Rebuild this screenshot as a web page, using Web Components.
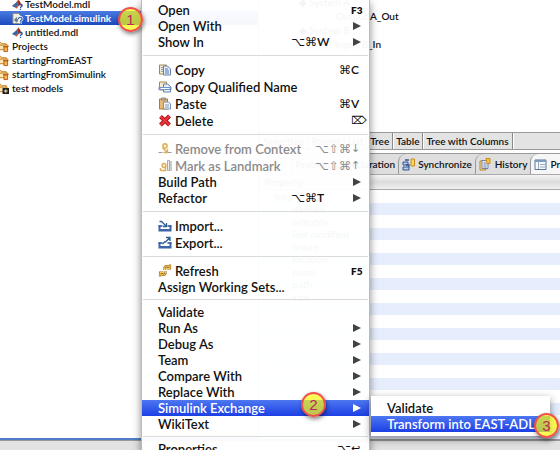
<!DOCTYPE html>
<html lang="en">
<head>
<meta charset="utf-8">
<title>Workbench context menu</title>
<style>
html, body { margin: 0; height: 100%; overflow: hidden; background: #fff; }
body { font: 600 10px/14px Lato, "Noto Sans", sans-serif; color: #111; }
</style>
</head>
<body>
<work-bench></work-bench>
<script>
const ICONS = {
  copy: '<path d="M1 2h7v9H1z" fill="#f6ead0" stroke="#a08a50"/><path d="M5 3h4l3 3v6H5z" fill="#e6eefb" stroke="#6580a8"/><path d="M6.500 6h3M6.500 8h4M6.500 10h4" stroke="#4a74b8"/><path d="M2.500 4.500h2M2.500 6.500h2M2.500 8.500h2" stroke="#7d9cc8"/>',
  copyName: '<path d="M1 2h7v8H1z" fill="#f6ead0" stroke="#a08a50"/><path d="M5 4h4l3 2.500V12H5z" fill="#e6eefb" stroke="#6580a8"/><path d="M0 7h13v3H0z" fill="#6f95cc"/><path d="M2 8.500h9" stroke="#fff"/>',
  paste: '<path d="M1 2h8v10H1z" fill="#e8b877" stroke="#b07830"/><path d="M3 1h4v2H3z" fill="#bbb" stroke="#888"/><path d="M5 5h5l2 2v5H5z" fill="#f2f5fb" stroke="#7d8fae"/><path d="M6.500 8h4M6.500 10h4" stroke="#7a98c4"/>',
  del: '<path d="M2 2.500L11 11M11 2L2 11" stroke="#a30f16" stroke-width="4"/><path d="M2 2.500L11 11M11 2L2 11" stroke="#f0343a" stroke-width="2.400"/>',
  remove: '<path d="M0 10.500h4M9 10.500h4" stroke="#99a" stroke-width="1.200"/><circle cx="6.500" cy="4" r="2.200" fill="#fbeecb" stroke="#dcae5c" stroke-width="1.400"/><path d="M4 6l5 4.500M9 7v3.500H5" fill="none" stroke="#dcae5c" stroke-width="1.400"/>',
  mark: '<path d="M9 1.500h2v10H9z" fill="#eee" stroke="#aaa"/><path d="M12.500 2v10" stroke="#999"/><circle cx="5.500" cy="6.500" r="2" fill="#fbeecb" stroke="#dcae5c" stroke-width="1.400"/><path d="M2 11.500h5V8M2 9v2.500" fill="none" stroke="#dcae5c" stroke-width="1.500"/>',
  imp: '<path d="M0 6.500h2V10h9V6.500h2v6H0z" fill="#3d66a8"/><path d="M0 7h4M9 7h4" stroke="#2b5195" stroke-width="1.400"/><path d="M1 2.500h2l5 5M8 4v3.500H4.500" fill="none" stroke="#2b6097" stroke-width="1.300"/>',
  exp: '<path d="M0 6.500h2V10h9V6.500h2v6H0z" fill="#3d66a8"/><path d="M0 7h4M9 7h4" stroke="#2b5195" stroke-width="1.400"/><path d="M4 8l2-2h1l4-4M7.500 1.500H11.500V5" fill="none" stroke="#2b6097" stroke-width="1.300"/>',
  refresh: '<path d="M6 6V3.500C7 1.500 9 2 11 3M11.500 .500V4.500H8M7 7V9.500C6 11.500 4 11 2 10M1.500 12.500V8.500H5" fill="none" stroke="#a8681a" stroke-width="2.200"/><path d="M6 6V3.500C7 1.500 9 2 11 3M11.500 1V4.500H8.500M7 7V9.500C6 11.500 4 11 2 10M1.500 12V8.500H4.500" fill="none" stroke="#f7cf58" stroke-width="1"/>',
  mdl: '<path d="M0 8l4-3 3-4 2 3 2 5-3-2-3 4-2-2z" fill="#d8552a"/><path d="M0 8l4-3 2-2 0 4-2 3z" fill="#2f6fae"/><path d="M7 1l2 4-2 3z" fill="#8c2013"/><path d="M7.500 7.500c0-2 3.500-2 3.500 0 0 1.500-1.700 1-1.700 2.700M9.200 11v1.500" fill="none" stroke="#1f55b8" stroke-width="1.400"/>',
  slk: '<path d="M1 1h6l3 3v8H1z" fill="#f4f1e4" stroke="#8e8c80"/><path d="M2 8l3-3 2 3-2 3z" fill="#6d7f86"/><path d="M7 7c0-2.500 4-2.500 4 0 0 1.500-2 1-2 3M9 11v1.500" fill="none" stroke="#fff" stroke-width="2.600"/><path d="M7 7c0-2.500 4-2.500 4 0 0 1.500-2 1-2 3M9 11v1.500" fill="none" stroke="#1f55b8" stroke-width="1.300"/>',
  folder: '<path d="M0 2h4l1 1.500h5V6H0z" fill="#fbd99a" stroke="#c07a1c"/><path d="M0 10l2-5h10l-2 5z" fill="#fde6b4" stroke="#c07a1c"/><path d="M7.500 7h4v5h-4z" fill="#f9b45a" stroke="#b45c10"/><path d="M6.500 6.500h6" stroke="#b45c10"/>',
  closed: '<path d="M0 2h4l1 1.500h5V6H0z" fill="#fbd99a" stroke="#c07a1c"/><path d="M0 10l2-5h9l-1 5z" fill="#fde6b4" stroke="#c07a1c"/><path d="M6 6h7v6.500H6z" fill="#221f18"/><path d="M7.500 9.200h4M9.500 7.500V11" stroke="#e9e3cf" stroke-width="1.200"/>',
  sync: '<path d="M1 4h5v3H1zM1 9h6v3H1z" fill="#b9cdea" stroke="#2f5592"/><path d="M3 2h4M4 7h3v2" stroke="#2f5592" fill="none" stroke-width="1.300"/><path d="M9 1h3.500v7H9z" fill="#fbd36a" stroke="#c98a1c"/>',
  hist: '<path d="M1 3h6v9H1z" fill="#f3dc9b" stroke="#b5872a"/><path d="M3 2.500h6v8H3z" fill="#e9eef8" stroke="#6f83aa"/><path d="M4.500 5h3M4.500 7h3M4.500 9h3" stroke="#6f83aa"/><path d="M7 .500h4v5H8z" fill="#fbc33c" stroke="#c98a1c"/>',
  props: '<path d="M1 2h11v9.500H1z" fill="#f6f9ff" stroke="#58759e"/><path d="M1 2h11v2H1z" fill="#7f9ac0"/><path d="M4.500 4v7M6 6.500h5M6 9h5" stroke="#9ab"/>'
};
const icon = n => ICONS[n] ? `<svg viewBox="0 0 13 13" aria-hidden="true">${ICONS[n]}</svg>` : '';

function define(name, render) {
  customElements.define(name, class extends HTMLElement {
    connectedCallback() {
      if (!this.shadowRoot) this.attachShadow({ mode: 'open' }).innerHTML = render(this);
    }
  });
}

define('tree-row', el => `<style>
  :host { display: flex; align-items: center; height: 14px; padding-left: 12px; white-space: nowrap; }
  :host([folder]) { padding-left: 0; }
  :host([selected]) { background: linear-gradient(#4a7be0, #1c48c0); color: #fff; font-weight: 700; }
  svg { width: 12px; height: 13px; margin-right: 1px; flex: none; }
  :host([folder]) svg { margin-left: -3px; margin-right: 3px; }
</style>${icon(el.getAttribute('icon'))}<slot></slot>`);

define('file-tree', () => `<style>
  :host { display: block; margin-top: -3px; }
</style><slot></slot>`);

define('model-outline', () => `<style>
  :host { display: block; flex: none; height: 132px; padding-left: 40px; overflow: hidden; }
  div { height: 14px; }
  .sub { padding-left: 37px; }
  section { margin-top: -5px; }
</style><section><div>◆ System A</div><div class="sub">Output A_Out</div><div>◆ System B</div><div class="sub">Input B_In</div></section>`);

define('mode-tabs', () => `<style>
  :host { display: flex; flex: none; height: 16px; background: #e3e3e3; border-top: 1px solid #999; border-bottom: 1px solid #999; padding-left: 2px; }
  button { font: inherit; color: inherit; white-space: nowrap; border: 0; border-right: 1px solid #8a8a8a; background: none; padding: 0 3px; box-shadow: 1px 0 #fff; }
</style><button>Selection</button><button>Parent</button><button>List</button><button>Tree</button><button>Table</button><button>Tree with Columns</button>`);

define('view-tab', el => `<style>
  :host { display: flex; flex: none; }
  button { display: flex; align-items: center; gap: 3px; font: inherit; color: inherit; white-space: nowrap; border: 0; border-left: 1px solid #999; border-top-left-radius: 8px; background: #dedede; padding: 0 3px; }
  :host([active]) button { background: #f6f6f6; }
  svg { width: 13px; height: 13px; }
</style><button>${icon(el.getAttribute('icon'))}<slot></slot></button>`);

define('view-tabs', () => `<style>
  :host { display: flex; flex: none; height: 20px; margin-top: 3px; background: #dedede; border-top: 1px solid #999; border-bottom: 1px solid #aaa; overflow: hidden; padding-left: 33px; }
</style><slot></slot>`);

define('property-table', () => {
  const names = ['Info', 'derived', 'editable', 'last modified', 'linked', 'location', 'name', 'path', 'size'];
  const rows = Array.from({ length: 20 }, (_, i) => `<tr><td class="${i ? 'in' : ''}">${names[i] || ''}</td><td></td></tr>`).join('');
  return `<style>
  :host { display: block; flex: 1; min-height: 0; overflow: hidden; border-bottom: 1px solid #999; }
  table { width: 100%; border-collapse: collapse; font-weight: 400; line-height: 12px; }
  th { height: 14px; padding: 0 6px; text-align: left; font-weight: 400; background: linear-gradient(#f4f4f4, #dcdcdc 50%, #efefef); border-bottom: 1px solid #aaa; }
  td { height: 13px; padding: 0 16px; }
  tr:nth-child(even) td { height: 12px; background: #e6eefe; }
  td.in { padding-left: 34px; }
</style><table><thead><tr><th>Property</th><th></th></tr></thead><tbody>${rows}</tbody></table>`;
});

define('menu-item', el => {
  const mods = el.getAttribute('mods') || '', key = el.getAttribute('key') || '';
  return `<style>
  :host { display: block; }
  button { display: flex; align-items: center; box-sizing: border-box; width: 100%; height: 16px; border: 0; background: none; padding: 0 5px 0 16px; font: inherit; color: inherit; text-align: left; white-space: nowrap; }
  :host([icon]) button { height: 17px; }
  :host([disabled]) button { color: #8b8b8b; }
  :host([selected]) button { background: linear-gradient(#4d77f2, #1c3fe4); color: #fff; }
  svg { width: 14px; height: 13px; margin-right: 3px; flex: none; }
  .label { flex: 1; }
  .key { width: 13px; font-size: 12px; }
  .key.small { font-size: 10px; font-weight: 800; }
  .mods, .sym { font: 12px/16px "DejaVu Sans", sans-serif; }
  .key.sym { font-size: 11px; }
  .arrow { width: 0; height: 0; border: 4px solid transparent; border-left: 8px solid #444; border-right: 0; margin: 0 3px 0 23px; }
  :host([selected]) .arrow { border-left-color: #fff; }
</style><button role="menuitem"${el.hasAttribute('disabled') ? ' disabled' : ''}>${icon(el.getAttribute('icon'))}<span class="label"><slot></slot></span>${mods ? `<span class="mods">${mods}</span>` : ''}${key ? `<span class="key${/^F\d/.test(key) ? ' small' : /[^A-Z]/.test(key) ? ' sym' : ''}">${key}</span>` : ''}${el.hasAttribute('submenu') ? '<span class="arrow"></span>' : ''}</button>`;
});

define('menu-rule', () => `<style>
  :host { display: block; padding: 4px 0; }
  :host([wide]) { padding: 5px 0; }
  hr { margin: 0 1px; border: 0; height: 1px; background: #dadada; }
</style><hr>`);

define('context-menu', () => `<style>
  :host { display: block; box-sizing: border-box; background: rgba(255,255,255,.96); border: 0 solid #bbb; border-width: 0 1px; box-shadow: 0 3px 8px rgba(0,0,0,.45); font: 600 13px/16px Lato, "Noto Sans", sans-serif; color: #111; padding: 2px 0 4px; }
  :host([sub]) { background: #fff; padding: 4px 0; border: 0; }
</style><div role="menu"><slot></slot></div>`);

define('step-badge', () => `<style>
  :host { display: flex; align-items: center; justify-content: center; box-sizing: border-box; width: 25px; height: 25px; border: 2px solid #f0504c; border-radius: 50%; background: rgba(250,246,20,.72); box-shadow: 1px 2px 4px rgba(0,0,0,.5); color: #b8285c; font: 15px/20px "Liberation Sans", sans-serif; }
</style><slot></slot>`);

define('work-bench', () => `<style>
  :host { display: grid; grid-template-columns: 46% 1fr; grid-template-rows: minmax(0, 1fr) 10px; height: 100vh; position: relative; overflow: hidden; }
  .left { border-bottom: 2px solid #4f7ec6; overflow: hidden; }
  .right { display: flex; flex-direction: column; min-width: 0; border-left: 1px solid #999; overflow: hidden; }
  footer { grid-column: 1 / -1; background: #e2e2e2; border-top: 1px solid #999; }
  context-menu { position: absolute; top: 0; left: 141px; width: 229px; z-index: 1; }
  context-menu[sub] { top: 396px; left: 371px; width: 179px; z-index: 2; }
  step-badge { position: absolute; z-index: 3; }
  .b1 { left: 118px; top: 7px; } .b2 { left: 301px; top: 392px; } .b3 { left: 534px; top: 413px; }
</style>
<div class="left"><file-tree>
  <tree-row icon="mdl">TestModel.mdl</tree-row>
  <tree-row icon="slk" selected>TestModel.simulink</tree-row>
  <tree-row icon="mdl">untitled.mdl</tree-row>
  <tree-row icon="folder" folder>Projects</tree-row>
  <tree-row icon="folder" folder>startingFromEAST</tree-row>
  <tree-row icon="folder" folder>startingFromSimulink</tree-row>
  <tree-row icon="closed" folder>test models</tree-row>
</file-tree></div>
<div class="right">
  <model-outline></model-outline>
  <mode-tabs></mode-tabs>
  <view-tabs>
    <view-tab>Problems</view-tab><view-tab>Declaration</view-tab>
    <view-tab icon="sync">Synchronize</view-tab><view-tab icon="hist">History</view-tab><view-tab icon="props" active>Properties</view-tab>
  </view-tabs>
  <property-table></property-table>
</div>
<footer></footer>
<context-menu>
  <menu-item key="F3">Open</menu-item>
  <menu-item submenu>Open With</menu-item>
  <menu-item submenu mods="⌥⌘" key="W">Show In</menu-item>
  <menu-rule wide></menu-rule>
  <menu-item icon="copy" mods="⌘" key="C">Copy</menu-item>
  <menu-item icon="copyName">Copy Qualified Name</menu-item>
  <menu-item icon="paste" mods="⌘" key="V">Paste</menu-item>
  <menu-item icon="del" key="⌦">Delete</menu-item>
  <menu-rule wide></menu-rule>
  <menu-item icon="remove" disabled mods="⌥⇧⌘" key="↓">Remove from Context</menu-item>
  <menu-item icon="mark" disabled mods="⌥⇧⌘" key="↑">Mark as Landmark</menu-item>
  <menu-item submenu>Build Path</menu-item>
  <menu-item submenu mods="⌥⌘" key="T">Refactor</menu-item>
  <menu-rule wide></menu-rule>
  <menu-item icon="imp">Import...</menu-item>
  <menu-item icon="exp">Export...</menu-item>
  <menu-rule wide></menu-rule>
  <menu-item icon="refresh" key="F5">Refresh</menu-item>
  <menu-item>Assign Working Sets...</menu-item>
  <menu-rule></menu-rule>
  <menu-item>Validate</menu-item>
  <menu-item submenu>Run As</menu-item>
  <menu-item submenu>Debug As</menu-item>
  <menu-item submenu>Team</menu-item>
  <menu-item submenu>Compare With</menu-item>
  <menu-item submenu>Replace With</menu-item>
  <menu-item submenu selected>Simulink Exchange</menu-item>
  <menu-item submenu>WikiText</menu-item>
  <menu-rule></menu-rule>
  <menu-item mods="⌥" key="↩">Properties</menu-item>
</context-menu>
<context-menu sub>
  <menu-item>Validate</menu-item>
  <menu-item selected>Transform into EAST-ADL</menu-item>
</context-menu>
<step-badge class="b1">1</step-badge><step-badge class="b2">2</step-badge><step-badge class="b3">3</step-badge>`);
</script>
</body>
</html>
